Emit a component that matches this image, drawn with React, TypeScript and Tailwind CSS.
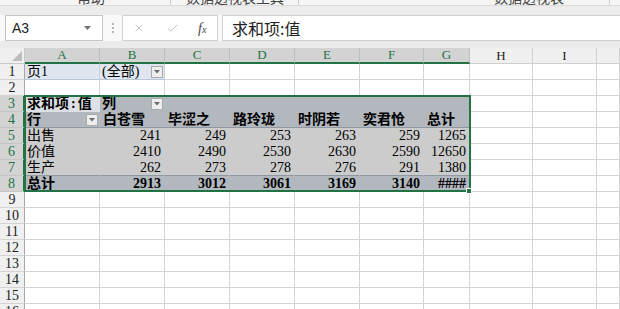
import { X, Check } from "lucide-react";
import { twMerge } from "tailwind-merge";

const COLS = ["A", "B", "C", "D", "E", "F", "G", "H", "I", ""];
const NAMES = ["白苍雪", "毕涩之", "路玲珑", "时阴若", "奕君怆", "总计"];
const BODY: [string, string[]][] = [
  ["出售", ["241", "249", "253", "263", "259", "1265"]],
  ["价值", ["2410", "2490", "2530", "2630", "2590", "12650"]],
  ["生产", ["262", "273", "278", "276", "291", "1380"]],
];
const TOTALS = ["2913", "3012", "3061", "3169", "3140", "####"];

const cellFont = { fontFamily: '"Liberation Serif", "Noto Sans CJK SC", serif' };

function DropBtn() {
  return (
    <span className="w-[12px] h-[12px] shrink-0 border border-[#ababab] bg-[#eeeeee] flex items-center justify-center">
      <svg width="6" height="4" viewBox="0 0 6 4">
        <polygon points="0,0 6,0 3,3.5" fill="#6b6b6b" />
      </svg>
    </span>
  );
}

function Cell({ className, children }: { className?: string; children?: React.ReactNode }) {
  return (
    <div
      className={twMerge(
        "h-[16px] border-r border-b border-[#d4d4d4] bg-white overflow-hidden whitespace-nowrap text-[14px] leading-[15px] text-black px-[2px] flex items-center",
        className
      )}
    >
      {children}
    </div>
  );
}

function RowHead({ n }: { n: number }) {
  const sel = n >= 3 && n <= 8;
  return (
    <div
      className={
        sel
          ? "h-[16px] border-b border-[#c4c4c4] border-r-2 border-r-[#217346] bg-[#d3d3d3] text-[#217346] text-[14px] leading-[15px] flex items-center justify-center"
          : "h-[16px] border-b border-[#d4d4d4] border-r border-r-[#a8a8a8] bg-[#f0f0f0] text-[#222] text-[14px] leading-[15px] flex items-center justify-center"
      }
      style={cellFont}
    >
      {n}
    </div>
  );
}

const HDR = "bg-[#b3b8bf] border-[#b3b8bf]";
const DATA = "bg-[#cccccc] border-[#cccccc]";
const PAGE = "bg-[#dfe6ef] border-r-[#c9d3df] border-b-[#b7c6d9]";

function pivotCells(r: number) {
  const cells: React.ReactNode[] = [];
  if (r === 1) {
    cells.push(<Cell key="a" className={PAGE}>页1</Cell>);
    cells.push(
      <Cell key="b" className={twMerge(PAGE, "justify-between pr-[1px]")}>
        <span>(全部)</span>
        <DropBtn />
      </Cell>
    );
    return cells;
  }
  if (r === 3) {
    cells.push(
      <Cell key="a" className="bg-[#dde1e6] border-[#dde1e6] font-bold">
        求和项<span className="px-[2px]">:</span>值
      </Cell>
    );
    cells.push(
      <Cell key="b" className={twMerge(HDR, "font-bold justify-between pr-[1px]")}>
        <span>列</span>
        <DropBtn />
      </Cell>
    );
    for (let i = 0; i < 5; i++) cells.push(<Cell key={i} className={HDR} />);
    return cells;
  }
  if (r === 4) {
    cells.push(
      <Cell key="a" className={twMerge(HDR, "border-b-[#8f97a1] font-bold justify-between pr-[1px]")}>
        <span>行</span>
        <DropBtn />
      </Cell>
    );
    NAMES.forEach((n) =>
      cells.push(
        <Cell key={n} className={twMerge(HDR, "border-b-[#8f97a1] font-bold pl-[3px]")}>
          {n}
        </Cell>
      )
    );
    return cells;
  }
  if (r >= 5 && r <= 7) {
    const [label, vals] = BODY[r - 5];
    const last = r === 7 ? "border-b-[#8f97a1]" : "";
    cells.push(<Cell key="a" className={twMerge(DATA, last)}>{label}</Cell>);
    vals.forEach((v, i) =>
      cells.push(
        <Cell key={i} className={twMerge(DATA, last, "justify-end pr-[3px]")}>
          {v}
        </Cell>
      )
    );
    return cells;
  }
  // r === 8
  cells.push(<Cell key="a" className={twMerge(HDR, "font-bold")}>总计</Cell>);
  TOTALS.forEach((v, i) =>
    cells.push(
      <Cell key={i} className={twMerge(HDR, "font-bold justify-end pr-[3px]")}>
        {v}
      </Cell>
    )
  );
  return cells;
}

export default function App() {
  const rows = Array.from({ length: 16 }, (_, i) => i + 1);

  return (
    <div className="w-[620px] h-[309px] overflow-hidden bg-white select-none" style={{ fontFamily: '"Liberation Sans", "Noto Sans CJK SC", sans-serif' }}>
      {/* ribbon tail, only its lower edge shows */}
      <div className="h-[6px] bg-[#f4f4f4] overflow-hidden relative border-b border-[#dcdcdc]">
        <div className="flex items-start -mt-[11px] text-[14px] leading-[16px] text-[#444]" style={{ fontFamily: '"Noto Sans CJK SC", sans-serif' }}>
          <span className="ml-[77px] w-[93px]">帮助</span>
          <span className="w-px h-[20px] bg-[#cfcfcf]" />
          <span className="ml-[15px] w-[112px]">数据透视表工具</span>
          <span className="w-px h-[20px] bg-[#cfcfcf]" />
          <span className="ml-[195px] w-[115px]">数据透视表</span>
          <span className="w-px h-[20px] bg-[#cfcfcf]" />
        </div>
      </div>
      <div className="h-[9px] bg-[#ececec]" />

      {/* formula bar */}
      <div className="h-[26px] bg-[#f9f9f9] flex items-stretch pl-[5px]">
        <div className="w-[98px] border border-[#c6c6c6] bg-white flex items-center justify-between pl-[6px] pr-[11px]">
          <span className="text-[14px] text-[#222]">A3</span>
          <svg width="7" height="4" viewBox="0 0 7 4">
            <polygon points="0,0 7,0 3.5,4" fill="#707070" />
          </svg>
        </div>
        <div className="w-[19px] flex flex-col items-center justify-center gap-[2px]">
          <span className="w-[2px] h-[2px] bg-[#b5b5b5]" />
          <span className="w-[2px] h-[2px] bg-[#b5b5b5]" />
          <span className="w-[2px] h-[2px] bg-[#b5b5b5]" />
        </div>
        <div className="w-[96px] border border-[#d0d0d0] bg-white flex items-center">
          <X className="w-[12px] h-[12px] text-[#b0b0b0] ml-[10px]" strokeWidth={1.5} />
          <Check className="w-[13px] h-[13px] text-[#b0b0b0] ml-[21px]" strokeWidth={1.5} />
          <span className="ml-[19px] italic text-[14px] text-[#444]" style={{ fontFamily: '"Liberation Serif", serif' }}>
            f<span className="text-[10px]">x</span>
          </span>
        </div>
        <div className="flex-1 ml-[4px] border border-r-0 border-[#d0d0d0] bg-white flex items-center pl-[9px]">
          <span className="text-[16px] text-[#222]" style={{ fontFamily: '"Noto Sans CJK SC", sans-serif' }}>
            求和项:值
          </span>
        </div>
      </div>
      <div className="h-[7px] bg-[#ebebeb]" />

      {/* sheet */}
      <div className="relative">
        <div className="grid grid-cols-[25px_75px_65px_65px_65px_65px_64px_46px_63px_64px_23px]">
          <div className="h-[16px] bg-[#f0f0f0] border-r border-b border-[#c8c8c8] relative overflow-hidden">
            <svg className="absolute right-[2px] bottom-[2px]" width="10" height="10" viewBox="0 0 10 10">
              <polygon points="10,0 10,10 0,10" fill="#bdbdbd" />
            </svg>
          </div>
          {COLS.map((c, i) => (
            <div
              key={i}
              className={
                i < 7
                  ? "h-[16px] bg-[#d3d3d3] border-r border-[#bdbdbd] border-b-2 border-b-[#217346] text-[#217346] text-[13px] leading-[14px] flex items-center justify-center"
                  : "h-[16px] bg-[#f0f0f0] border-r border-b border-[#d0d0d0] text-[#222] text-[13px] leading-[14px] flex items-center justify-center"
              }
              style={cellFont}
            >
              {c}
            </div>
          ))}

          {rows.map((r) => {
            const hasPivot = r === 1 || (r >= 3 && r <= 8);
            const pivot = hasPivot ? pivotCells(r) : [];
            return (
              <div key={r} className="contents" style={cellFont}>
                <RowHead n={r} />
                {pivot}
                {Array.from({ length: 10 - pivot.length }, (_, j) => (
                  <Cell key={`e${j}`} />
                ))}
              </div>
            );
          })}
        </div>

        {/* selection A3:G8 */}
        <div className="absolute left-[24px] top-[47px] w-[447px] h-[97px] border-2 border-[#217346] pointer-events-none" />
        <div className="absolute left-[466px] top-[140px] w-[6px] h-[6px] bg-[#217346] border border-white" />
      </div>
    </div>
  );
}
